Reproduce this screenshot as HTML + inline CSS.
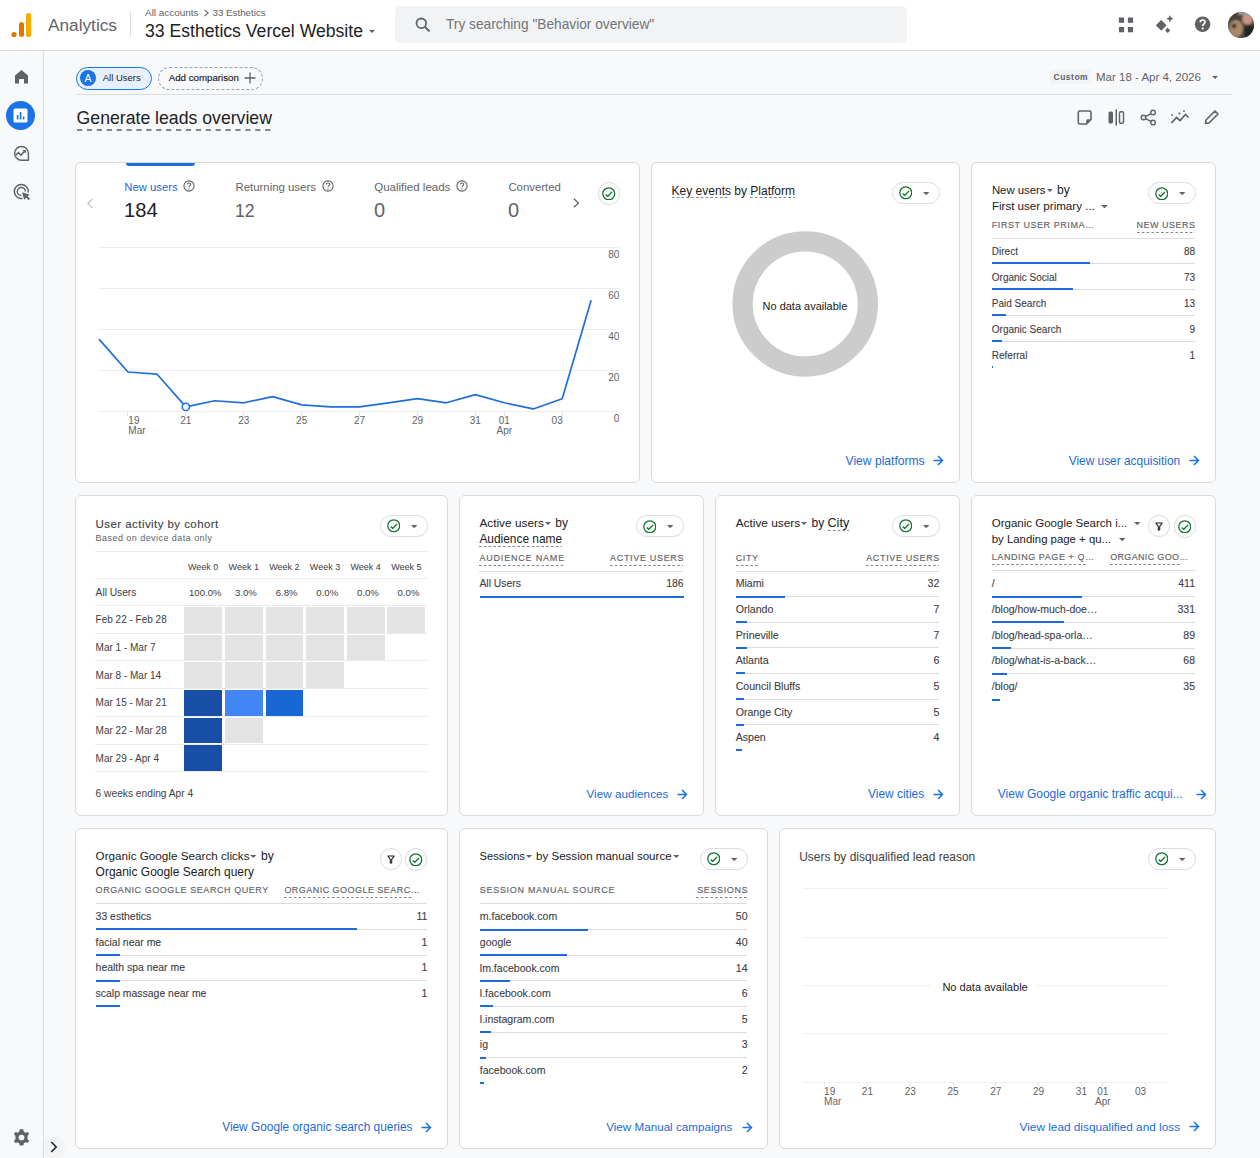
<!DOCTYPE html><html><head><meta charset="utf-8"><style>
html,body{margin:0;padding:0;}
body{width:1260px;height:1158px;position:relative;overflow:hidden;background:#f8f9fa;font-family:"Liberation Sans",sans-serif;}
.t{position:absolute;white-space:nowrap;line-height:1;}
.r{position:absolute;display:block;}
.card{position:absolute;background:#fff;border:1px solid #d9dadc;border-radius:6px;}
.chip{position:absolute;background:#fff;border:1px solid #dadce0;border-radius:11px;}
</style></head><body>
<div class="r" style="left:0.00px;top:0.00px;width:1260.00px;height:50.00px;background:#fff;"></div>
<div class="r" style="left:0.00px;top:50.00px;width:1260.00px;height:1.00px;background:#dadce0;"></div>
<svg class="r" style="left:10px;top:11px;" width="24" height="28" viewBox="0 0 24 28"><circle cx="4" cy="23.5" r="2.6" fill="#e37400"/><rect x="9" y="11" width="5" height="15" rx="2.5" fill="#e37400"/><rect x="16" y="2" width="5.2" height="24" rx="2.6" fill="#f9ab00"/></svg>
<div class="t" style="top:15px;font-size:17.246px;color:#5f6368;line-height:20px;left:48.00px;">Analytics</div>
<div class="r" style="left:130.00px;top:12.00px;width:1.00px;height:25.00px;background:#dadce0;"></div>
<div class="t" style="top:3px;font-size:9.959px;color:#5f6368;line-height:20px;left:145.00px;">All accounts</div>
<svg class="r" style="left:203px;top:9px;" width="7" height="8" viewBox="0 0 7 8"><path d="M1.5 0.8L5.2 4L1.5 7.2" fill="none" stroke="#5f6368" stroke-width="1.1"/></svg>
<div class="t" style="top:3px;font-size:9.785px;color:#5f6368;line-height:20px;left:212.50px;">33 Esthetics</div>
<div class="t" style="top:21px;font-size:17.613px;color:#202124;line-height:20px;left:145.00px;">33 Esthetics Vercel Website</div>
<svg class="r" style="left:369px;top:29.5px;" width="6" height="3" viewBox="0 0 6 3"><path d="M0 0H6L3.0 3Z" fill="#5f6368"/></svg>
<div class="r" style="left:395px;top:6px;width:512px;height:37px;background:#f1f3f4;border-radius:5px"></div>
<svg class="r" style="left:415px;top:17px;" width="17" height="15" viewBox="0 0 17 15"><circle cx="6.3" cy="6.3" r="4.8" fill="none" stroke="#5f6368" stroke-width="1.8"/><path d="M9.8 9.8L14.6 14.4" stroke="#5f6368" stroke-width="2"/></svg>
<div class="t" style="top:15px;font-size:13.723px;color:#70757a;line-height:20px;left:446.00px;">Try searching "Behavior overview"</div>
<svg class="r" style="left:1118px;top:17px;" width="16" height="16" viewBox="0 0 16 16"><rect x="0.9" y="0.5" width="5.2" height="5.3" fill="#5f6368"/><rect x="9.9" y="0.5" width="5.2" height="5.3" fill="#5f6368"/><rect x="0.9" y="10" width="5.2" height="5.3" fill="#5f6368"/><rect x="9.9" y="10" width="5.2" height="5.3" fill="#5f6368"/></svg>
<svg class="r" style="left:1154px;top:14px;" width="20" height="20" viewBox="0 0 20 20"><path d="M7.2 5.9L12.6 11.3L7.2 16.7L1.8 11.3Z" fill="#5f6368"/><path d="M15.9 1L17 3.6L19.6 4.7L17 5.8L15.9 8.4L14.8 5.8L12.2 4.7L14.8 3.6Z" fill="#5f6368"/><path d="M13.7 13.8L16.3 16.4L13.7 19L11.1 16.4Z" fill="#5f6368"/></svg>
<svg class="r" style="left:1194px;top:16px;" width="17" height="17" viewBox="0 0 17 17"><circle cx="8.6" cy="8.3" r="7.8" fill="#616161"/><path d="M6.2 6.3C6.2 4.8 7.2 4 8.6 4C10 4 11 4.9 11 6.1C11 7.8 8.7 7.9 8.7 10" fill="none" stroke="#fff" stroke-width="1.7"/><circle cx="8.7" cy="12.4" r="1.05" fill="#fff"/></svg>
<div class="r" style="left:1228px;top:12px;width:26px;height:26px;border-radius:50%;overflow:hidden;background:#4a4038"><div class="r" style="left:0;top:0;width:26px;height:26px;filter:blur(1.2px)"><div class="r" style="left:14px;top:1px;width:11px;height:12px;border-radius:50%;background:#c99682"></div><div class="r" style="left:1px;top:8px;width:14px;height:17px;border-radius:45%;background:#a88a68"></div><div class="r" style="left:17px;top:14px;width:10px;height:12px;background:#1e231f"></div><div class="r" style="left:10px;top:-2px;width:16px;height:5px;background:#9a9d98"></div><div class="r" style="left:4px;top:12px;width:4px;height:4px;border-radius:50%;background:#2a2420"></div></div></div>
<div class="r" style="left:43.00px;top:51.00px;width:1.00px;height:1107.00px;background:#dadce0;"></div>
<svg class="r" style="left:14px;top:69px;" width="15" height="15" viewBox="0 0 15 15"><path d="M7.5 1L14 6.5V14.5H10V10H5V14.5H1V6.5Z" fill="#5f6368"/></svg>
<div class="r" style="left:6px;top:101px;width:29px;height:29px;border-radius:50%;background:#1a73e8"></div>
<svg class="r" style="left:13px;top:108px;" width="15" height="15" viewBox="0 0 15 15"><rect x="0.5" y="0.5" width="14" height="14" rx="1.5" fill="#fff"/><rect x="3.8" y="7" width="1.6" height="4.5" fill="#1a73e8"/><rect x="6.8" y="4" width="1.6" height="7.5" fill="#1a73e8"/><rect x="9.8" y="8.5" width="1.6" height="3" fill="#1a73e8"/></svg>
<svg class="r" style="left:13px;top:145px;" width="17" height="17" viewBox="0 0 17 17"><path d="M15.4 8.3A6.9 6.9 0 1 0 8.5 15.2H15.4Z" fill="none" stroke="#5f6368" stroke-width="1.5" stroke-linejoin="round"/><path d="M2.9 10.2L5.3 7.6L7.8 10.1L11.3 6.6" fill="none" stroke="#5f6368" stroke-width="1.5"/><path d="M9.4 5H12.9V8.5Z" fill="#5f6368"/></svg>
<svg class="r" style="left:12px;top:183px;" width="18" height="18" viewBox="0 0 18 18"><path d="M16.2 9.7A7 7 0 1 0 10.5 15.4" fill="none" stroke="#5f6368" stroke-width="1.5"/><path d="M13.3 8.5A4 4 0 1 0 9.3 12.5" fill="none" stroke="#5f6368" stroke-width="1.5"/><path d="M10 9.2L17.5 11.4L12.2 16.7Z" fill="#5f6368"/><path d="M14 13.2L17.3 16.5" stroke="#5f6368" stroke-width="1.9"/></svg>
<svg class="r" style="left:12px;top:1128px;" width="19" height="19" viewBox="0 0 19 19"><g transform="translate(9.5 9.5) scale(1.1) translate(-8.5 -8.5)"><path d="M8.5 0.8L10.2 1.2L10.6 3.2L12.2 4.2L14.1 3.5L15.4 5.5L14 7V10L15.4 11.5L14.1 13.5L12.2 12.8L10.6 13.8L10.2 15.8H6.8L6.4 13.8L4.8 12.8L2.9 13.5L1.6 11.5L3 10V7L1.6 5.5L2.9 3.5L4.8 4.2L6.4 3.2L6.8 1.2Z" fill="#5f6368"/><circle cx="8.5" cy="8.5" r="2.6" fill="#f8f9fa"/></g></svg>
<div class="r" style="left:42px;top:1135px;width:24px;height:24px;border-radius:50%;background:#f3f4f5"></div>
<div class="r" style="left:43.00px;top:1135.00px;width:1.00px;height:23.00px;background:#dadce0;"></div>
<svg class="r" style="left:50px;top:1141px;" width="8" height="12" viewBox="0 0 8 12"><path d="M1.2 1L6.2 6L1.2 11" fill="none" stroke="#202124" stroke-width="1.6"/></svg>
<div class="r" style="left:76px;top:67px;width:74px;height:21px;border:1px solid #1a73e8;border-radius:12px;background:#e8f0fe"></div>
<div class="r" style="left:80px;top:70px;width:16px;height:16px;border-radius:50%;background:#1a73e8"></div>
<div class="t" style="top:68px;font-size:10.5px;color:#fff;line-height:20px;left:88.10px;transform:translateX(-50%);">A</div>
<div class="t" style="top:68px;font-size:9.473px;color:#202124;line-height:20px;left:102.80px;">All Users</div>
<div class="r" style="left:158px;top:67px;width:103px;height:21px;border:1px dashed #9aa0a6;border-radius:12px"></div>
<div class="t" style="top:68px;font-size:9.729px;color:#202124;line-height:20px;left:168.70px;-webkit-text-stroke:0.15px #202124;">Add comparison</div>
<svg class="r" style="left:244px;top:72px;" width="12" height="12" viewBox="0 0 12 12"><path d="M6 0.5V11.5M0.5 6H11.5" stroke="#5f6368" stroke-width="1.3"/></svg>
<div class="r" style="left:76.00px;top:94.00px;width:1156.00px;height:1.00px;background:#dadce0;"></div>
<div class="r" style="left:1050px;top:70px;width:41px;height:14px;background:#f1f3f4;border-radius:2px"></div>
<div class="t" style="top:67px;font-size:8.5px;color:#5f6368;line-height:20px;font-weight:700;letter-spacing:0.5px;left:1053.50px;">Custom</div>
<div class="t" style="top:67px;font-size:11.518px;color:#5f6368;line-height:20px;left:1096.00px;">Mar 18 - Apr 4, 2026</div>
<svg class="r" style="left:1212px;top:76px;" width="6" height="3" viewBox="0 0 6 3"><path d="M0 0H6L3.0 3Z" fill="#5f6368"/></svg>
<div class="t" style="top:108px;font-size:17.679px;color:#202124;line-height:20px;left:76.60px;">Generate leads overview</div>
<svg class="r" style="left:76.5px;top:129px;" width="196.5" height="2" viewBox="0 0 196.5 2"><line x1="0" y1="1.0" x2="196.5" y2="1.0" stroke="#80868b" stroke-width="2" stroke-dasharray="5.2 4.7"/></svg>
<svg class="r" style="left:1076px;top:109px;" width="17" height="17" viewBox="0 0 17 17"><path d="M2.3 3.5Q2.3 2 3.8 2H13.5Q15 2 15 3.5V10.5L10.5 15H3.8Q2.3 15 2.3 13.5Z" fill="none" stroke="#5f6368" stroke-width="1.6" stroke-linejoin="round"/><path d="M10.2 15.2V11.8Q10.2 10.3 11.7 10.3H15.2Z" fill="#5f6368"/></svg>
<svg class="r" style="left:1107px;top:109px;" width="19" height="17" viewBox="0 0 19 17"><rect x="1.5" y="2.5" width="4.5" height="12" rx="1.5" fill="#5f6368"/><rect x="8.5" y="0.5" width="1.5" height="16" fill="#5f6368"/><rect x="12.5" y="2.8" width="4" height="11.5" rx="1.2" fill="none" stroke="#5f6368" stroke-width="1.5"/></svg>
<svg class="r" style="left:1140px;top:109px;" width="17" height="17" viewBox="0 0 17 17"><circle cx="13" cy="3.5" r="2.3" fill="none" stroke="#5f6368" stroke-width="1.4"/><circle cx="3.5" cy="8.5" r="2.3" fill="none" stroke="#5f6368" stroke-width="1.4"/><circle cx="13" cy="13.5" r="2.3" fill="none" stroke="#5f6368" stroke-width="1.4"/><path d="M5.5 7.4L11 4.6M5.5 9.6L11 12.4" stroke="#5f6368" stroke-width="1.4"/></svg>
<svg class="r" style="left:1170px;top:109px;" width="20" height="17" viewBox="0 0 20 17"><path d="M1.5 14L6.5 8.5L10 11.5L15.5 5.5L18.5 8.5" fill="none" stroke="#5f6368" stroke-width="1.7"/><circle cx="2" cy="6" r="0.9" fill="#5f6368"/><circle cx="9.5" cy="4.5" r="1.1" fill="#5f6368"/><circle cx="14" cy="2" r="0.9" fill="#5f6368"/></svg>
<svg class="r" style="left:1203px;top:109px;" width="17" height="17" viewBox="0 0 17 17"><path d="M2.5 14.5L3 11L12 2L15 5L6 14Z" fill="none" stroke="#5f6368" stroke-width="1.7" stroke-linejoin="round"/></svg>
<div class="card" style="left:75px;top:162px;width:563px;height:319px"></div>
<div class="card" style="left:651px;top:162px;width:307px;height:319px"></div>
<div class="card" style="left:971px;top:162px;width:243px;height:319px"></div>
<div class="card" style="left:75px;top:495px;width:371px;height:319px"></div>
<div class="card" style="left:459px;top:495px;width:243px;height:319px"></div>
<div class="card" style="left:715px;top:495px;width:243px;height:319px"></div>
<div class="card" style="left:971px;top:495px;width:243px;height:319px"></div>
<div class="card" style="left:75px;top:828px;width:371px;height:319px"></div>
<div class="card" style="left:459px;top:828px;width:307px;height:319px"></div>
<div class="card" style="left:779px;top:828px;width:435px;height:319px"></div>
<div class="r" style="left:126px;top:163px;width:69px;height:3px;background:#1a6fdc;border-radius:0 0 3px 3px"></div>
<svg class="r" style="left:86px;top:198px;" width="8" height="11" viewBox="0 0 8 11"><path d="M6.5 0.8L1.8 5.5L6.5 10.2" fill="none" stroke="#bdc1c6" stroke-width="1.2"/></svg>
<div class="t" style="top:177px;font-size:11.304px;color:#1b6bd6;line-height:20px;left:124.30px;">New users</div>
<svg class="r" style="left:183.3px;top:180.2px;" width="12" height="12" viewBox="0 0 12 12"><circle cx="6" cy="6" r="5.1" fill="none" stroke="#5f6368" stroke-width="1.1"/><path d="M4.3 4.6C4.3 3.6 5 3 6 3C7 3 7.7 3.6 7.7 4.5C7.7 5.6 6 5.8 6 7.2" fill="none" stroke="#5f6368" stroke-width="1.1"/><circle cx="6" cy="8.9" r="0.7" fill="#5f6368"/></svg>
<div class="t" style="top:200px;font-size:20.204px;color:#202124;line-height:20px;left:124.00px;">184</div>
<div class="t" style="top:177px;font-size:11.418px;color:#5f6368;line-height:20px;left:235.40px;">Returning users</div>
<svg class="r" style="left:321.7px;top:180.2px;" width="12" height="12" viewBox="0 0 12 12"><circle cx="6" cy="6" r="5.1" fill="none" stroke="#5f6368" stroke-width="1.1"/><path d="M4.3 4.6C4.3 3.6 5 3 6 3C7 3 7.7 3.6 7.7 4.5C7.7 5.6 6 5.8 6 7.2" fill="none" stroke="#5f6368" stroke-width="1.1"/><circle cx="6" cy="8.9" r="0.7" fill="#5f6368"/></svg>
<div class="t" style="top:201px;font-size:17.626px;color:#5f6368;line-height:20px;left:235.00px;">12</div>
<div class="t" style="top:177px;font-size:11.534px;color:#5f6368;line-height:20px;left:374.20px;">Qualified leads</div>
<svg class="r" style="left:456px;top:180.2px;" width="12" height="12" viewBox="0 0 12 12"><circle cx="6" cy="6" r="5.1" fill="none" stroke="#5f6368" stroke-width="1.1"/><path d="M4.3 4.6C4.3 3.6 5 3 6 3C7 3 7.7 3.6 7.7 4.5C7.7 5.6 6 5.8 6 7.2" fill="none" stroke="#5f6368" stroke-width="1.1"/><circle cx="6" cy="8.9" r="0.7" fill="#5f6368"/></svg>
<div class="t" style="top:200px;font-size:20px;color:#5f6368;line-height:20px;left:374.00px;">0</div>
<div class="r" style="left:508px;top:178px;width:55px;height:45px;overflow:hidden">
<div class="t" style="top:-1px;font-size:11.4px;color:#5f6368;line-height:20px;left:0.40px;">Converted</div>
<div class="t" style="top:22px;font-size:20px;color:#5f6368;line-height:20px;left:0.00px;">0</div>
</div>
<svg class="r" style="left:572px;top:198px;" width="9" height="10" viewBox="0 0 9 10"><path d="M1.8 0.8L6.5 5L1.8 9.2" fill="none" stroke="#5f6368" stroke-width="1.3"/></svg>
<div class="chip" style="left:597.5px;top:182.3px;width:20.5px;height:20.5px;border-radius:50%"></div>
<svg class="r" style="left:602.0px;top:186.8px;" width="13.5" height="13.5" viewBox="0 0 13.5 13.5"><circle cx="6.75" cy="6.75" r="5.95" fill="none" stroke="#137333" stroke-width="1.3"/><path d="M3.6450000000000005 7.425000000000001 L5.805 9.315 L10.125 4.859999999999999" fill="none" stroke="#137333" stroke-width="1.35"/></svg>
<div class="r" style="left:98.00px;top:246.70px;width:521.00px;height:1.00px;background:#eeeeee;"></div>
<div class="r" style="left:98.00px;top:287.80px;width:521.00px;height:1.00px;background:#eeeeee;"></div>
<div class="r" style="left:98.00px;top:328.90px;width:521.00px;height:1.00px;background:#eeeeee;"></div>
<div class="r" style="left:98.00px;top:369.70px;width:521.00px;height:1.00px;background:#eeeeee;"></div>
<div class="r" style="left:98.00px;top:410.50px;width:521.00px;height:1.00px;background:#eeeeee;"></div>
<div class="t" style="top:245px;font-size:10px;color:#5f6368;line-height:20px;right:640.60px;">80</div>
<div class="t" style="top:286px;font-size:10px;color:#5f6368;line-height:20px;right:640.60px;">60</div>
<div class="t" style="top:327px;font-size:10px;color:#5f6368;line-height:20px;right:640.60px;">40</div>
<div class="t" style="top:368px;font-size:10px;color:#5f6368;line-height:20px;right:640.60px;">20</div>
<div class="t" style="top:409px;font-size:10px;color:#5f6368;line-height:20px;right:640.60px;">0</div>
<svg class="r" style="left:90px;top:230px;" width="520" height="200" viewBox="0 0 520 200"><path d="M9.00 109.16 L37.95 142.00 L66.90 144.06 L95.85 176.89 L124.80 170.74 L153.75 172.79 L182.70 166.63 L211.65 174.84 L240.60 176.89 L269.55 176.89 L298.50 172.79 L327.45 168.69 L356.40 172.79 L385.35 164.58 L414.30 172.79 L443.25 178.95 L472.20 168.69 L501.15 70.16" fill="none" stroke="#1f6fd9" stroke-width="1.7" stroke-linejoin="round"/><circle cx="95.85" cy="176.89" r="3.6" fill="#fff" stroke="#1a73e8" stroke-width="1.6"/></svg>
<div class="r" style="left:127.45px;top:411.00px;width:1.00px;height:5.00px;background:#e6e6e6;"></div>
<div class="t" style="top:411px;font-size:10px;color:#5f6368;line-height:20px;left:128.35px;">19</div>
<div class="t" style="top:421px;font-size:10px;color:#5f6368;line-height:20px;left:128.35px;">Mar</div>
<div class="r" style="left:185.35px;top:411.00px;width:1.00px;height:5.00px;background:#e6e6e6;"></div>
<div class="t" style="top:411px;font-size:10px;color:#5f6368;line-height:20px;left:185.85px;transform:translateX(-50%);">21</div>
<div class="r" style="left:243.25px;top:411.00px;width:1.00px;height:5.00px;background:#e6e6e6;"></div>
<div class="t" style="top:411px;font-size:10px;color:#5f6368;line-height:20px;left:243.75px;transform:translateX(-50%);">23</div>
<div class="r" style="left:301.15px;top:411.00px;width:1.00px;height:5.00px;background:#e6e6e6;"></div>
<div class="t" style="top:411px;font-size:10px;color:#5f6368;line-height:20px;left:301.65px;transform:translateX(-50%);">25</div>
<div class="r" style="left:359.05px;top:411.00px;width:1.00px;height:5.00px;background:#e6e6e6;"></div>
<div class="t" style="top:411px;font-size:10px;color:#5f6368;line-height:20px;left:359.55px;transform:translateX(-50%);">27</div>
<div class="r" style="left:416.95px;top:411.00px;width:1.00px;height:5.00px;background:#e6e6e6;"></div>
<div class="t" style="top:411px;font-size:10px;color:#5f6368;line-height:20px;left:417.45px;transform:translateX(-50%);">29</div>
<div class="r" style="left:474.85px;top:411.00px;width:1.00px;height:5.00px;background:#e6e6e6;"></div>
<div class="t" style="top:411px;font-size:10px;color:#5f6368;line-height:20px;left:475.35px;transform:translateX(-50%);">31</div>
<div class="r" style="left:503.80px;top:411.00px;width:1.00px;height:5.00px;background:#e6e6e6;"></div>
<div class="t" style="top:411px;font-size:10px;color:#5f6368;line-height:20px;left:504.30px;transform:translateX(-50%);">01</div>
<div class="t" style="top:421px;font-size:10px;color:#5f6368;line-height:20px;left:504.30px;transform:translateX(-50%);">Apr</div>
<div class="r" style="left:561.70px;top:411.00px;width:1.00px;height:5.00px;background:#e6e6e6;"></div>
<div class="t" style="top:411px;font-size:10px;color:#5f6368;line-height:20px;right:697.30px;">03</div>
<div class="t" style="top:181px;font-size:12.011px;color:#202124;line-height:20px;left:671.60px;">Key events by Platform</div>
<svg class="r" style="left:671.6px;top:197px;" width="58.4" height="1" viewBox="0 0 58.4 1"><line x1="0" y1="0.5" x2="58.39999999999998" y2="0.5" stroke="#80868b" stroke-width="1" stroke-dasharray="2.6 2.2"/></svg>
<svg class="r" style="left:750px;top:197px;" width="45" height="1" viewBox="0 0 45 1"><line x1="0" y1="0.5" x2="45" y2="0.5" stroke="#80868b" stroke-width="1" stroke-dasharray="2.6 2.2"/></svg>
<div class="chip" style="left:892px;top:182px;width:46px;height:20px"></div>
<svg class="r" style="left:898.75px;top:186.45px;" width="13.5" height="13.5" viewBox="0 0 13.5 13.5"><circle cx="6.75" cy="6.75" r="5.95" fill="none" stroke="#137333" stroke-width="1.3"/><path d="M3.6450000000000005 7.425000000000001 L5.805 9.315 L10.125 4.859999999999999" fill="none" stroke="#137333" stroke-width="1.35"/></svg>
<svg class="r" style="left:922.5px;top:191.7px;" width="6.5" height="3.2" viewBox="0 0 6.5 3.2"><path d="M0 0H6.5L3.25 3.2Z" fill="#5f6368"/></svg>
<svg class="r" style="left:725px;top:224px;" width="160" height="160" viewBox="0 0 160 160"><circle cx="80.2" cy="79.9" r="62.6" fill="none" stroke="#cccccc" stroke-width="20.3"/></svg>
<div class="t" style="top:296px;font-size:10.986px;color:#202124;line-height:20px;left:762.60px;">No data available</div>
<div class="t" style="top:451px;font-size:12.08px;color:#1b6bd6;line-height:20px;left:845.60px;">View platforms</div>
<svg class="r" style="left:933px;top:455.3px;" width="11" height="11" viewBox="0 0 11 11"><path d="M0.5 5.5H9.5M5 1L9.5 5.5L5 10" fill="none" stroke="#1a73e8" stroke-width="1.5"/></svg>
<div class="t" style="top:180px;font-size:11.367px;color:#202124;line-height:20px;left:991.90px;">New users</div>
<svg class="r" style="left:1047.2px;top:189.2px;" width="5.8" height="2.9" viewBox="0 0 5.8 2.9"><path d="M0 0H5.8L2.9 2.9Z" fill="#5f6368"/></svg>
<div class="t" style="top:180px;font-size:12px;color:#202124;line-height:20px;left:1057.00px;">by</div>
<div class="t" style="top:196px;font-size:11.586px;color:#202124;line-height:20px;left:991.90px;">First user primary ...</div>
<svg class="r" style="left:1101.4px;top:204.6px;" width="6.9" height="3.2" viewBox="0 0 6.9 3.2"><path d="M0 0H6.9L3.45 3.2Z" fill="#5f6368"/></svg>
<div class="chip" style="left:1148px;top:182.3px;width:46px;height:20px"></div>
<svg class="r" style="left:1154.75px;top:186.75px;" width="13.5" height="13.5" viewBox="0 0 13.5 13.5"><circle cx="6.75" cy="6.75" r="5.95" fill="none" stroke="#137333" stroke-width="1.3"/><path d="M3.6450000000000005 7.425000000000001 L5.805 9.315 L10.125 4.859999999999999" fill="none" stroke="#137333" stroke-width="1.35"/></svg>
<svg class="r" style="left:1178.5px;top:192.0px;" width="6.5" height="3.2" viewBox="0 0 6.5 3.2"><path d="M0 0H6.5L3.25 3.2Z" fill="#5f6368"/></svg>
<div class="t" style="top:215px;font-size:9px;color:#5f6368;line-height:20px;letter-spacing:0.553px;left:991.80px;-webkit-text-stroke:0.15px #5f6368;">FIRST USER PRIMA…</div>
<div class="t" style="top:215px;font-size:9px;color:#5f6368;line-height:20px;letter-spacing:0.5px;right:64.50px;-webkit-text-stroke:0.15px #5f6368;">NEW USERS</div>
<svg class="r" style="left:1136.5px;top:232.3px;" width="58.5" height="1" viewBox="0 0 58.5 1"><line x1="0" y1="0.5" x2="58.5" y2="0.5" stroke="#80868b" stroke-width="1" stroke-dasharray="2.6 2.2"/></svg>
<div class="r" style="left:991.80px;top:237.50px;width:203.20px;height:1.00px;background:#dadce0;"></div>
<div class="t" style="top:242px;font-size:10.0px;color:#3c4043;line-height:20px;left:991.80px;-webkit-text-stroke:0.1px #3c4043;">Direct</div>
<div class="t" style="top:242px;font-size:10.0px;color:#3c4043;line-height:20px;right:65.00px;-webkit-text-stroke:0.1px #3c4043;">88</div>
<div class="r" style="left:991.80px;top:262.80px;width:203.20px;height:1.00px;background:#dadce0;"></div>
<div class="r" style="left:992.30px;top:262.30px;width:98.00px;height:2.00px;background:#1c6bd9;"></div>
<div class="t" style="top:268px;font-size:10.0px;color:#3c4043;line-height:20px;left:991.80px;-webkit-text-stroke:0.1px #3c4043;">Organic Social</div>
<div class="t" style="top:268px;font-size:10.0px;color:#3c4043;line-height:20px;right:65.00px;-webkit-text-stroke:0.1px #3c4043;">73</div>
<div class="r" style="left:991.80px;top:288.70px;width:203.20px;height:1.00px;background:#dadce0;"></div>
<div class="r" style="left:992.30px;top:288.20px;width:81.00px;height:2.00px;background:#1c6bd9;"></div>
<div class="t" style="top:294px;font-size:10.0px;color:#3c4043;line-height:20px;left:991.80px;-webkit-text-stroke:0.1px #3c4043;">Paid Search</div>
<div class="t" style="top:294px;font-size:10.0px;color:#3c4043;line-height:20px;right:65.00px;-webkit-text-stroke:0.1px #3c4043;">13</div>
<div class="r" style="left:991.80px;top:314.60px;width:203.20px;height:1.00px;background:#dadce0;"></div>
<div class="r" style="left:992.30px;top:314.10px;width:14.00px;height:2.00px;background:#1c6bd9;"></div>
<div class="t" style="top:320px;font-size:10.0px;color:#3c4043;line-height:20px;left:991.80px;-webkit-text-stroke:0.1px #3c4043;">Organic Search</div>
<div class="t" style="top:320px;font-size:10.0px;color:#3c4043;line-height:20px;right:65.00px;-webkit-text-stroke:0.1px #3c4043;">9</div>
<div class="r" style="left:991.80px;top:340.50px;width:203.20px;height:1.00px;background:#dadce0;"></div>
<div class="r" style="left:992.30px;top:340.00px;width:10.00px;height:2.00px;background:#1c6bd9;"></div>
<div class="t" style="top:346px;font-size:10.0px;color:#3c4043;line-height:20px;left:991.80px;-webkit-text-stroke:0.1px #3c4043;">Referral</div>
<div class="t" style="top:346px;font-size:10.0px;color:#3c4043;line-height:20px;right:65.00px;-webkit-text-stroke:0.1px #3c4043;">1</div>
<div class="r" style="left:992.30px;top:365.90px;width:1.20px;height:2.00px;background:#1c6bd9;"></div>
<div class="t" style="top:451px;font-size:11.903px;color:#1b6bd6;line-height:20px;left:1068.70px;">View user acquisition</div>
<svg class="r" style="left:1189.2px;top:455.3px;" width="11" height="11" viewBox="0 0 11 11"><path d="M0.5 5.5H9.5M5 1L9.5 5.5L5 10" fill="none" stroke="#1a73e8" stroke-width="1.5"/></svg>
<div class="t" style="top:514px;font-size:11.5px;color:#3c4043;line-height:20px;letter-spacing:0.436px;left:95.60px;-webkit-text-stroke:0.12px #3c4043;">User activity by cohort</div>
<div class="t" style="top:528px;font-size:9px;color:#5f6368;line-height:20px;letter-spacing:0.451px;left:95.60px;">Based on device data only</div>
<div class="chip" style="left:380px;top:515px;width:46px;height:20px"></div>
<svg class="r" style="left:386.75px;top:519.45px;" width="13.5" height="13.5" viewBox="0 0 13.5 13.5"><circle cx="6.75" cy="6.75" r="5.95" fill="none" stroke="#137333" stroke-width="1.3"/><path d="M3.6450000000000005 7.425000000000001 L5.805 9.315 L10.125 4.859999999999999" fill="none" stroke="#137333" stroke-width="1.35"/></svg>
<svg class="r" style="left:410.5px;top:524.7px;" width="6.5" height="3.2" viewBox="0 0 6.5 3.2"><path d="M0 0H6.5L3.25 3.2Z" fill="#5f6368"/></svg>
<div class="r" style="left:95.00px;top:551.00px;width:332.00px;height:1.00px;background:#e8eaed;"></div>
<div class="t" style="top:557px;font-size:9px;color:#3c4043;line-height:20px;left:203.10px;transform:translateX(-50%);">Week 0</div>
<div class="t" style="top:557px;font-size:9px;color:#3c4043;line-height:20px;left:243.75px;transform:translateX(-50%);">Week 1</div>
<div class="t" style="top:557px;font-size:9px;color:#3c4043;line-height:20px;left:284.40px;transform:translateX(-50%);">Week 2</div>
<div class="t" style="top:557px;font-size:9px;color:#3c4043;line-height:20px;left:325.05px;transform:translateX(-50%);">Week 3</div>
<div class="t" style="top:557px;font-size:9px;color:#3c4043;line-height:20px;left:365.70px;transform:translateX(-50%);">Week 4</div>
<div class="t" style="top:557px;font-size:9px;color:#3c4043;line-height:20px;left:406.35px;transform:translateX(-50%);">Week 5</div>
<div class="r" style="left:95.00px;top:578.30px;width:332.00px;height:1.00px;background:#e8eaed;"></div>
<div class="t" style="top:583px;font-size:10.197px;color:#3c4043;line-height:20px;left:95.60px;">All Users</div>
<div class="t" style="top:583px;font-size:9.6px;color:#3c4043;line-height:20px;left:205.30px;transform:translateX(-50%);">100.0%</div>
<div class="t" style="top:583px;font-size:9.6px;color:#3c4043;line-height:20px;left:245.95px;transform:translateX(-50%);">3.0%</div>
<div class="t" style="top:583px;font-size:9.6px;color:#3c4043;line-height:20px;left:286.60px;transform:translateX(-50%);">6.8%</div>
<div class="t" style="top:583px;font-size:9.6px;color:#3c4043;line-height:20px;left:327.25px;transform:translateX(-50%);">0.0%</div>
<div class="t" style="top:583px;font-size:9.6px;color:#3c4043;line-height:20px;left:367.90px;transform:translateX(-50%);">0.0%</div>
<div class="t" style="top:583px;font-size:9.6px;color:#3c4043;line-height:20px;left:408.55px;transform:translateX(-50%);">0.0%</div>
<div class="r" style="left:95.00px;top:605.10px;width:332.00px;height:1.00px;background:#e8eaed;"></div>
<div class="r" style="left:95.00px;top:632.79px;width:332.00px;height:1.00px;background:#e8eaed;"></div>
<div class="r" style="left:95.00px;top:660.48px;width:332.00px;height:1.00px;background:#e8eaed;"></div>
<div class="r" style="left:95.00px;top:688.17px;width:332.00px;height:1.00px;background:#e8eaed;"></div>
<div class="r" style="left:95.00px;top:715.86px;width:332.00px;height:1.00px;background:#e8eaed;"></div>
<div class="r" style="left:95.00px;top:743.55px;width:332.00px;height:1.00px;background:#e8eaed;"></div>
<div class="r" style="left:95.00px;top:771.24px;width:332.00px;height:1.00px;background:#e8eaed;"></div>
<div class="t" style="top:610px;font-size:10px;color:#3c4043;line-height:20px;left:95.60px;">Feb 22 - Feb 28</div>
<div class="r" style="left:184.20px;top:606.90px;width:37.80px;height:25.80px;background:#e3e3e3;"></div>
<div class="r" style="left:224.85px;top:606.90px;width:37.80px;height:25.80px;background:#e3e3e3;"></div>
<div class="r" style="left:265.50px;top:606.90px;width:37.80px;height:25.80px;background:#e3e3e3;"></div>
<div class="r" style="left:306.15px;top:606.90px;width:37.80px;height:25.80px;background:#e3e3e3;"></div>
<div class="r" style="left:346.80px;top:606.90px;width:37.80px;height:25.80px;background:#e3e3e3;"></div>
<div class="r" style="left:387.45px;top:606.90px;width:37.80px;height:25.80px;background:#e3e3e3;"></div>
<div class="t" style="top:638px;font-size:10px;color:#3c4043;line-height:20px;left:95.60px;">Mar 1 - Mar 7</div>
<div class="r" style="left:184.20px;top:634.59px;width:37.80px;height:25.80px;background:#e3e3e3;"></div>
<div class="r" style="left:224.85px;top:634.59px;width:37.80px;height:25.80px;background:#e3e3e3;"></div>
<div class="r" style="left:265.50px;top:634.59px;width:37.80px;height:25.80px;background:#e3e3e3;"></div>
<div class="r" style="left:306.15px;top:634.59px;width:37.80px;height:25.80px;background:#e3e3e3;"></div>
<div class="r" style="left:346.80px;top:634.59px;width:37.80px;height:25.80px;background:#e3e3e3;"></div>
<div class="t" style="top:666px;font-size:10px;color:#3c4043;line-height:20px;left:95.60px;">Mar 8 - Mar 14</div>
<div class="r" style="left:184.20px;top:662.28px;width:37.80px;height:25.80px;background:#e3e3e3;"></div>
<div class="r" style="left:224.85px;top:662.28px;width:37.80px;height:25.80px;background:#e3e3e3;"></div>
<div class="r" style="left:265.50px;top:662.28px;width:37.80px;height:25.80px;background:#e3e3e3;"></div>
<div class="r" style="left:306.15px;top:662.28px;width:37.80px;height:25.80px;background:#e3e3e3;"></div>
<div class="t" style="top:693px;font-size:10px;color:#3c4043;line-height:20px;left:95.60px;">Mar 15 - Mar 21</div>
<div class="r" style="left:184.20px;top:689.97px;width:37.80px;height:25.80px;background:#174ea6;"></div>
<div class="r" style="left:224.85px;top:689.97px;width:37.80px;height:25.80px;background:#4285f4;"></div>
<div class="r" style="left:265.50px;top:689.97px;width:37.80px;height:25.80px;background:#1967d2;"></div>
<div class="t" style="top:721px;font-size:10px;color:#3c4043;line-height:20px;left:95.60px;">Mar 22 - Mar 28</div>
<div class="r" style="left:184.20px;top:717.66px;width:37.80px;height:25.80px;background:#174ea6;"></div>
<div class="r" style="left:224.85px;top:717.66px;width:37.80px;height:25.80px;background:#e3e3e3;"></div>
<div class="t" style="top:749px;font-size:10px;color:#3c4043;line-height:20px;left:95.60px;">Mar 29 - Apr 4</div>
<div class="r" style="left:184.20px;top:745.35px;width:37.80px;height:25.80px;background:#174ea6;"></div>
<div class="t" style="top:784px;font-size:10.218px;color:#3c4043;line-height:20px;left:95.60px;">6 weeks ending Apr 4</div>
<div class="t" style="top:513px;font-size:11.844px;color:#202124;line-height:20px;left:479.40px;">Active users</div>
<svg class="r" style="left:545px;top:522px;" width="6.1" height="3" viewBox="0 0 6.1 3"><path d="M0 0H6.1L3.05 3Z" fill="#5f6368"/></svg>
<div class="t" style="top:513px;font-size:12px;color:#202124;line-height:20px;left:555.30px;">by</div>
<div class="t" style="top:529px;font-size:11.915px;color:#202124;line-height:20px;left:479.40px;">Audience name</div>
<svg class="r" style="left:479.4px;top:546px;" width="83.1" height="1" viewBox="0 0 83.1 1"><line x1="0" y1="0.5" x2="83.10000000000002" y2="0.5" stroke="#80868b" stroke-width="1" stroke-dasharray="2.6 2.2"/></svg>
<div class="chip" style="left:636px;top:515.3px;width:46px;height:20px"></div>
<svg class="r" style="left:642.75px;top:519.75px;" width="13.5" height="13.5" viewBox="0 0 13.5 13.5"><circle cx="6.75" cy="6.75" r="5.95" fill="none" stroke="#137333" stroke-width="1.3"/><path d="M3.6450000000000005 7.425000000000001 L5.805 9.315 L10.125 4.859999999999999" fill="none" stroke="#137333" stroke-width="1.35"/></svg>
<svg class="r" style="left:666.5px;top:525.0px;" width="6.5" height="3.2" viewBox="0 0 6.5 3.2"><path d="M0 0H6.5L3.25 3.2Z" fill="#5f6368"/></svg>
<div class="t" style="top:548px;font-size:9px;color:#5f6368;line-height:20px;letter-spacing:0.815px;left:479.40px;-webkit-text-stroke:0.15px #5f6368;">AUDIENCE NAME</div>
<div class="t" style="top:548px;font-size:9px;color:#5f6368;line-height:20px;letter-spacing:0.671px;right:575.83px;-webkit-text-stroke:0.15px #5f6368;">ACTIVE USERS</div>
<svg class="r" style="left:479.4px;top:565.2px;" width="84.8" height="1" viewBox="0 0 84.8 1"><line x1="0" y1="0.5" x2="84.80000000000007" y2="0.5" stroke="#80868b" stroke-width="1" stroke-dasharray="2.6 2.2"/></svg>
<svg class="r" style="left:609.8px;top:565.2px;" width="73.5" height="1" viewBox="0 0 73.5 1"><line x1="0" y1="0.5" x2="73.5" y2="0.5" stroke="#80868b" stroke-width="1" stroke-dasharray="2.6 2.2"/></svg>
<div class="r" style="left:479.40px;top:570.50px;width:204.10px;height:1.00px;background:#dadce0;"></div>
<div class="t" style="top:574px;font-size:10.4px;color:#3c4043;line-height:20px;left:479.40px;-webkit-text-stroke:0.1px #3c4043;">All Users</div>
<div class="t" style="top:574px;font-size:10.4px;color:#3c4043;line-height:20px;right:576.50px;-webkit-text-stroke:0.1px #3c4043;">186</div>
<div class="r" style="left:479.90px;top:595.80px;width:204.00px;height:2.00px;background:#1c6bd9;"></div>
<div class="t" style="top:784px;font-size:11.738px;color:#1b6bd6;line-height:20px;left:586.50px;">View audiences</div>
<svg class="r" style="left:677px;top:788.8px;" width="11" height="11" viewBox="0 0 11 11"><path d="M0.5 5.5H9.5M5 1L9.5 5.5L5 10" fill="none" stroke="#1a73e8" stroke-width="1.5"/></svg>
<div class="t" style="top:513px;font-size:11.844px;color:#202124;line-height:20px;left:735.70px;">Active users</div>
<svg class="r" style="left:801.2px;top:521.9px;" width="6" height="3" viewBox="0 0 6 3"><path d="M0 0H6L3.0 3Z" fill="#5f6368"/></svg>
<div class="t" style="top:513px;font-size:12px;color:#202124;line-height:20px;left:811.50px;">by</div>
<div class="t" style="top:513px;font-size:12.602px;color:#202124;line-height:20px;left:827.50px;">City</div>
<svg class="r" style="left:827.5px;top:530px;" width="21.7" height="1" viewBox="0 0 21.7 1"><line x1="0" y1="0.5" x2="21.700000000000045" y2="0.5" stroke="#80868b" stroke-width="1" stroke-dasharray="2.6 2.2"/></svg>
<div class="chip" style="left:892px;top:515px;width:46px;height:20px"></div>
<svg class="r" style="left:898.75px;top:519.45px;" width="13.5" height="13.5" viewBox="0 0 13.5 13.5"><circle cx="6.75" cy="6.75" r="5.95" fill="none" stroke="#137333" stroke-width="1.3"/><path d="M3.6450000000000005 7.425000000000001 L5.805 9.315 L10.125 4.859999999999999" fill="none" stroke="#137333" stroke-width="1.35"/></svg>
<svg class="r" style="left:922.5px;top:524.7px;" width="6.5" height="3.2" viewBox="0 0 6.5 3.2"><path d="M0 0H6.5L3.25 3.2Z" fill="#5f6368"/></svg>
<div class="t" style="top:548px;font-size:9px;color:#5f6368;line-height:20px;letter-spacing:0.633px;left:735.70px;-webkit-text-stroke:0.15px #5f6368;">CITY</div>
<div class="t" style="top:548px;font-size:9px;color:#5f6368;line-height:20px;letter-spacing:0.644px;right:320.06px;-webkit-text-stroke:0.15px #5f6368;">ACTIVE USERS</div>
<svg class="r" style="left:735.7px;top:565.3px;" width="22.4" height="1" viewBox="0 0 22.4 1"><line x1="0" y1="0.5" x2="22.399999999999977" y2="0.5" stroke="#80868b" stroke-width="1" stroke-dasharray="2.6 2.2"/></svg>
<svg class="r" style="left:866px;top:565.3px;" width="73" height="1" viewBox="0 0 73 1"><line x1="0" y1="0.5" x2="73" y2="0.5" stroke="#80868b" stroke-width="1" stroke-dasharray="2.6 2.2"/></svg>
<div class="r" style="left:735.70px;top:570.90px;width:203.60px;height:1.00px;background:#dadce0;"></div>
<div class="t" style="top:573px;font-size:10.6px;color:#3c4043;line-height:20px;left:735.70px;-webkit-text-stroke:0.1px #3c4043;">Miami</div>
<div class="t" style="top:573px;font-size:10.6px;color:#3c4043;line-height:20px;right:320.70px;-webkit-text-stroke:0.1px #3c4043;">32</div>
<div class="r" style="left:735.70px;top:596.00px;width:203.60px;height:1.00px;background:#dadce0;"></div>
<div class="r" style="left:736.20px;top:595.50px;width:49.00px;height:2.00px;background:#1c6bd9;"></div>
<div class="t" style="top:599px;font-size:10.6px;color:#3c4043;line-height:20px;left:735.70px;-webkit-text-stroke:0.1px #3c4043;">Orlando</div>
<div class="t" style="top:599px;font-size:10.6px;color:#3c4043;line-height:20px;right:320.70px;-webkit-text-stroke:0.1px #3c4043;">7</div>
<div class="r" style="left:735.70px;top:621.65px;width:203.60px;height:1.00px;background:#dadce0;"></div>
<div class="r" style="left:736.20px;top:621.15px;width:11.00px;height:2.00px;background:#1c6bd9;"></div>
<div class="t" style="top:625px;font-size:10.6px;color:#3c4043;line-height:20px;left:735.70px;-webkit-text-stroke:0.1px #3c4043;">Prineville</div>
<div class="t" style="top:625px;font-size:10.6px;color:#3c4043;line-height:20px;right:320.70px;-webkit-text-stroke:0.1px #3c4043;">7</div>
<div class="r" style="left:735.70px;top:647.30px;width:203.60px;height:1.00px;background:#dadce0;"></div>
<div class="r" style="left:736.20px;top:646.80px;width:11.00px;height:2.00px;background:#1c6bd9;"></div>
<div class="t" style="top:650px;font-size:10.6px;color:#3c4043;line-height:20px;left:735.70px;-webkit-text-stroke:0.1px #3c4043;">Atlanta</div>
<div class="t" style="top:650px;font-size:10.6px;color:#3c4043;line-height:20px;right:320.70px;-webkit-text-stroke:0.1px #3c4043;">6</div>
<div class="r" style="left:735.70px;top:672.95px;width:203.60px;height:1.00px;background:#dadce0;"></div>
<div class="r" style="left:736.20px;top:672.45px;width:9.00px;height:2.00px;background:#1c6bd9;"></div>
<div class="t" style="top:676px;font-size:10.6px;color:#3c4043;line-height:20px;left:735.70px;-webkit-text-stroke:0.1px #3c4043;">Council Bluffs</div>
<div class="t" style="top:676px;font-size:10.6px;color:#3c4043;line-height:20px;right:320.70px;-webkit-text-stroke:0.1px #3c4043;">5</div>
<div class="r" style="left:735.70px;top:698.60px;width:203.60px;height:1.00px;background:#dadce0;"></div>
<div class="r" style="left:736.20px;top:698.10px;width:8.00px;height:2.00px;background:#1c6bd9;"></div>
<div class="t" style="top:702px;font-size:10.6px;color:#3c4043;line-height:20px;left:735.70px;-webkit-text-stroke:0.1px #3c4043;">Orange City</div>
<div class="t" style="top:702px;font-size:10.6px;color:#3c4043;line-height:20px;right:320.70px;-webkit-text-stroke:0.1px #3c4043;">5</div>
<div class="r" style="left:735.70px;top:724.25px;width:203.60px;height:1.00px;background:#dadce0;"></div>
<div class="r" style="left:736.20px;top:723.75px;width:8.00px;height:2.00px;background:#1c6bd9;"></div>
<div class="t" style="top:727px;font-size:10.6px;color:#3c4043;line-height:20px;left:735.70px;-webkit-text-stroke:0.1px #3c4043;">Aspen</div>
<div class="t" style="top:727px;font-size:10.6px;color:#3c4043;line-height:20px;right:320.70px;-webkit-text-stroke:0.1px #3c4043;">4</div>
<div class="r" style="left:736.20px;top:749.40px;width:6.00px;height:2.00px;background:#1c6bd9;"></div>
<div class="t" style="top:784px;font-size:11.921px;color:#1b6bd6;line-height:20px;left:868.10px;">View cities</div>
<svg class="r" style="left:932.8px;top:788.8px;" width="11" height="11" viewBox="0 0 11 11"><path d="M0.5 5.5H9.5M5 1L9.5 5.5L5 10" fill="none" stroke="#1a73e8" stroke-width="1.5"/></svg>
<div class="t" style="top:513px;font-size:11.507px;color:#202124;line-height:20px;left:991.80px;">Organic Google Search i...</div>
<svg class="r" style="left:1134px;top:522px;" width="6.5" height="3.2" viewBox="0 0 6.5 3.2"><path d="M0 0H6.5L3.25 3.2Z" fill="#5f6368"/></svg>
<div class="t" style="top:529px;font-size:11.392px;color:#202124;line-height:20px;left:991.80px;">by Landing page + qu...</div>
<svg class="r" style="left:1118.5px;top:537.8px;" width="6.5" height="3.2" viewBox="0 0 6.5 3.2"><path d="M0 0H6.5L3.25 3.2Z" fill="#5f6368"/></svg>
<div class="chip" style="left:1148px;top:515.3px;width:19.5px;height:19.5px;border-radius:50%"></div>
<svg class="r" style="left:1154.75px;top:521.55px;" width="8" height="9" viewBox="0 0 8 9"><path d="M0.8 1H7.2L4.7 4.3V8H3.3V4.3Z" fill="none" stroke="#202124" stroke-width="1.1" stroke-linejoin="round"/></svg>
<div class="chip" style="left:1173.5px;top:515.3px;width:20.3px;height:20.3px;border-radius:50%"></div>
<svg class="r" style="left:1177.9px;top:519.7px;" width="13.5" height="13.5" viewBox="0 0 13.5 13.5"><circle cx="6.75" cy="6.75" r="5.95" fill="none" stroke="#137333" stroke-width="1.3"/><path d="M3.6450000000000005 7.425000000000001 L5.805 9.315 L10.125 4.859999999999999" fill="none" stroke="#137333" stroke-width="1.35"/></svg>
<div class="t" style="top:547px;font-size:9px;color:#5f6368;line-height:20px;letter-spacing:0.568px;left:991.80px;-webkit-text-stroke:0.15px #5f6368;">LANDING PAGE + Q…</div>
<div class="t" style="top:547px;font-size:9px;color:#5f6368;line-height:20px;letter-spacing:0.327px;left:1110.20px;-webkit-text-stroke:0.15px #5f6368;">ORGANIC GOO…</div>
<svg class="r" style="left:992px;top:564.2px;" width="95" height="1" viewBox="0 0 95 1"><line x1="0" y1="0.5" x2="95" y2="0.5" stroke="#80868b" stroke-width="1" stroke-dasharray="2.6 2.2"/></svg>
<svg class="r" style="left:1110.2px;top:564.2px;" width="71.8" height="1" viewBox="0 0 71.8 1"><line x1="0" y1="0.5" x2="71.79999999999995" y2="0.5" stroke="#80868b" stroke-width="1" stroke-dasharray="2.6 2.2"/></svg>
<div class="r" style="left:991.80px;top:569.80px;width:203.20px;height:1.00px;background:#dadce0;"></div>
<div class="t" style="top:573px;font-size:10.5px;color:#3c4043;line-height:20px;left:991.80px;-webkit-text-stroke:0.1px #3c4043;">/</div>
<div class="t" style="top:573px;font-size:10.5px;color:#3c4043;line-height:20px;right:65.00px;-webkit-text-stroke:0.1px #3c4043;">411</div>
<div class="r" style="left:991.80px;top:596.00px;width:203.20px;height:1.00px;background:#dadce0;"></div>
<div class="r" style="left:992.30px;top:595.50px;width:90.00px;height:2.00px;background:#1c6bd9;"></div>
<div class="t" style="top:599px;font-size:10.5px;color:#3c4043;line-height:20px;left:991.80px;-webkit-text-stroke:0.1px #3c4043;">/blog/how-much-doe…</div>
<div class="t" style="top:599px;font-size:10.5px;color:#3c4043;line-height:20px;right:65.00px;-webkit-text-stroke:0.1px #3c4043;">331</div>
<div class="r" style="left:991.80px;top:621.75px;width:203.20px;height:1.00px;background:#dadce0;"></div>
<div class="r" style="left:992.30px;top:621.25px;width:72.00px;height:2.00px;background:#1c6bd9;"></div>
<div class="t" style="top:625px;font-size:10.5px;color:#3c4043;line-height:20px;left:991.80px;-webkit-text-stroke:0.1px #3c4043;">/blog/head-spa-orla…</div>
<div class="t" style="top:625px;font-size:10.5px;color:#3c4043;line-height:20px;right:65.00px;-webkit-text-stroke:0.1px #3c4043;">89</div>
<div class="r" style="left:991.80px;top:647.50px;width:203.20px;height:1.00px;background:#dadce0;"></div>
<div class="r" style="left:992.30px;top:647.00px;width:19.00px;height:2.00px;background:#1c6bd9;"></div>
<div class="t" style="top:650px;font-size:10.5px;color:#3c4043;line-height:20px;left:991.80px;-webkit-text-stroke:0.1px #3c4043;">/blog/what-is-a-back…</div>
<div class="t" style="top:650px;font-size:10.5px;color:#3c4043;line-height:20px;right:65.00px;-webkit-text-stroke:0.1px #3c4043;">68</div>
<div class="r" style="left:991.80px;top:673.25px;width:203.20px;height:1.00px;background:#dadce0;"></div>
<div class="r" style="left:992.30px;top:672.75px;width:15.00px;height:2.00px;background:#1c6bd9;"></div>
<div class="t" style="top:676px;font-size:10.5px;color:#3c4043;line-height:20px;left:991.80px;-webkit-text-stroke:0.1px #3c4043;">/blog/</div>
<div class="t" style="top:676px;font-size:10.5px;color:#3c4043;line-height:20px;right:65.00px;-webkit-text-stroke:0.1px #3c4043;">35</div>
<div class="r" style="left:992.30px;top:698.50px;width:8.00px;height:2.00px;background:#1c6bd9;"></div>
<div class="t" style="top:784px;font-size:12.013px;color:#1b6bd6;line-height:20px;left:997.80px;">View Google organic traffic acqui...</div>
<svg class="r" style="left:1195.5px;top:788.8px;" width="11" height="11" viewBox="0 0 11 11"><path d="M0.5 5.5H9.5M5 1L9.5 5.5L5 10" fill="none" stroke="#1a73e8" stroke-width="1.5"/></svg>
<div class="t" style="top:846px;font-size:11.691px;color:#202124;line-height:20px;left:95.60px;">Organic Google Search clicks</div>
<svg class="r" style="left:250.3px;top:855.2px;" width="6.5" height="3" viewBox="0 0 6.5 3"><path d="M0 0H6.5L3.25 3Z" fill="#5f6368"/></svg>
<div class="t" style="top:846px;font-size:12px;color:#202124;line-height:20px;left:261.00px;">by</div>
<div class="t" style="top:862px;font-size:11.988px;color:#202124;line-height:20px;left:95.60px;">Organic Google Search query</div>
<div class="chip" style="left:380px;top:848.3px;width:19.7px;height:19.7px;border-radius:50%"></div>
<svg class="r" style="left:386.85px;top:854.65px;" width="8" height="9" viewBox="0 0 8 9"><path d="M0.8 1H7.2L4.7 4.3V8H3.3V4.3Z" fill="none" stroke="#202124" stroke-width="1.1" stroke-linejoin="round"/></svg>
<div class="chip" style="left:405px;top:848.3px;width:20.3px;height:20.3px;border-radius:50%"></div>
<svg class="r" style="left:409.4px;top:852.7px;" width="13.5" height="13.5" viewBox="0 0 13.5 13.5"><circle cx="6.75" cy="6.75" r="5.95" fill="none" stroke="#137333" stroke-width="1.3"/><path d="M3.6450000000000005 7.425000000000001 L5.805 9.315 L10.125 4.859999999999999" fill="none" stroke="#137333" stroke-width="1.35"/></svg>
<div class="t" style="top:880px;font-size:9px;color:#5f6368;line-height:20px;letter-spacing:0.57px;left:95.60px;-webkit-text-stroke:0.15px #5f6368;">ORGANIC GOOGLE SEARCH QUERY</div>
<div class="t" style="top:880px;font-size:9px;color:#5f6368;line-height:20px;letter-spacing:0.464px;left:284.40px;-webkit-text-stroke:0.15px #5f6368;">ORGANIC GOOGLE SEARC…</div>
<svg class="r" style="left:284.4px;top:897.1px;" width="128.6" height="1" viewBox="0 0 128.6 1"><line x1="0" y1="0.5" x2="128.60000000000002" y2="0.5" stroke="#80868b" stroke-width="1" stroke-dasharray="2.6 2.2"/></svg>
<div class="r" style="left:95.60px;top:902.50px;width:331.70px;height:1.00px;background:#dadce0;"></div>
<div class="t" style="top:907px;font-size:10.45px;color:#3c4043;line-height:20px;left:95.60px;-webkit-text-stroke:0.1px #3c4043;">33 esthetics</div>
<div class="t" style="top:907px;font-size:10.45px;color:#3c4043;line-height:20px;right:832.70px;-webkit-text-stroke:0.1px #3c4043;">11</div>
<div class="r" style="left:95.60px;top:928.90px;width:331.70px;height:1.00px;background:#dadce0;"></div>
<div class="r" style="left:96.10px;top:928.40px;width:261.00px;height:2.00px;background:#1c6bd9;"></div>
<div class="t" style="top:933px;font-size:10.45px;color:#3c4043;line-height:20px;left:95.60px;-webkit-text-stroke:0.1px #3c4043;">facial near me</div>
<div class="t" style="top:933px;font-size:10.45px;color:#3c4043;line-height:20px;right:832.70px;-webkit-text-stroke:0.1px #3c4043;">1</div>
<div class="r" style="left:95.60px;top:954.58px;width:331.70px;height:1.00px;background:#dadce0;"></div>
<div class="r" style="left:96.10px;top:954.08px;width:24.00px;height:2.00px;background:#1c6bd9;"></div>
<div class="t" style="top:958px;font-size:10.45px;color:#3c4043;line-height:20px;left:95.60px;-webkit-text-stroke:0.1px #3c4043;">health spa near me</div>
<div class="t" style="top:958px;font-size:10.45px;color:#3c4043;line-height:20px;right:832.70px;-webkit-text-stroke:0.1px #3c4043;">1</div>
<div class="r" style="left:95.60px;top:980.26px;width:331.70px;height:1.00px;background:#dadce0;"></div>
<div class="r" style="left:96.10px;top:979.76px;width:24.00px;height:2.00px;background:#1c6bd9;"></div>
<div class="t" style="top:984px;font-size:10.45px;color:#3c4043;line-height:20px;left:95.60px;-webkit-text-stroke:0.1px #3c4043;">scalp massage near me</div>
<div class="t" style="top:984px;font-size:10.45px;color:#3c4043;line-height:20px;right:832.70px;-webkit-text-stroke:0.1px #3c4043;">1</div>
<div class="r" style="left:96.10px;top:1005.44px;width:24.00px;height:2.00px;background:#1c6bd9;"></div>
<div class="t" style="top:1117px;font-size:11.878px;color:#1b6bd6;line-height:20px;left:222.20px;">View Google organic search queries</div>
<svg class="r" style="left:421.3px;top:1121.5px;" width="11" height="11" viewBox="0 0 11 11"><path d="M0.5 5.5H9.5M5 1L9.5 5.5L5 10" fill="none" stroke="#1a73e8" stroke-width="1.5"/></svg>
<div class="t" style="top:846px;font-size:11.188px;color:#202124;line-height:20px;left:479.60px;">Sessions</div>
<svg class="r" style="left:525.9px;top:855.1px;" width="6.1" height="3" viewBox="0 0 6.1 3"><path d="M0 0H6.1L3.05 3Z" fill="#5f6368"/></svg>
<div class="t" style="top:846px;font-size:11.57px;color:#202124;line-height:20px;left:536.00px;">by Session manual source</div>
<svg class="r" style="left:672.6px;top:855.1px;" width="6.6" height="3" viewBox="0 0 6.6 3"><path d="M0 0H6.6L3.3 3Z" fill="#5f6368"/></svg>
<div class="chip" style="left:700px;top:848px;width:46px;height:20px"></div>
<svg class="r" style="left:706.75px;top:852.45px;" width="13.5" height="13.5" viewBox="0 0 13.5 13.5"><circle cx="6.75" cy="6.75" r="5.95" fill="none" stroke="#137333" stroke-width="1.3"/><path d="M3.6450000000000005 7.425000000000001 L5.805 9.315 L10.125 4.859999999999999" fill="none" stroke="#137333" stroke-width="1.35"/></svg>
<svg class="r" style="left:730.5px;top:857.7px;" width="6.5" height="3.2" viewBox="0 0 6.5 3.2"><path d="M0 0H6.5L3.25 3.2Z" fill="#5f6368"/></svg>
<div class="t" style="top:880px;font-size:9px;color:#5f6368;line-height:20px;letter-spacing:0.7px;left:479.80px;-webkit-text-stroke:0.15px #5f6368;">SESSION MANUAL SOURCE</div>
<div class="t" style="top:880px;font-size:9px;color:#5f6368;line-height:20px;letter-spacing:0.612px;right:511.89px;-webkit-text-stroke:0.15px #5f6368;">SESSIONS</div>
<svg class="r" style="left:696.4px;top:897.2px;" width="50.6" height="1" viewBox="0 0 50.6 1"><line x1="0" y1="0.5" x2="50.60000000000002" y2="0.5" stroke="#80868b" stroke-width="1" stroke-dasharray="2.6 2.2"/></svg>
<div class="r" style="left:479.80px;top:903.10px;width:267.70px;height:1.00px;background:#dadce0;"></div>
<div class="t" style="top:906px;font-size:10.55px;color:#3c4043;line-height:20px;left:479.80px;-webkit-text-stroke:0.1px #3c4043;">m.facebook.com</div>
<div class="t" style="top:906px;font-size:10.55px;color:#3c4043;line-height:20px;right:512.50px;-webkit-text-stroke:0.1px #3c4043;">50</div>
<div class="r" style="left:479.80px;top:929.00px;width:267.70px;height:1.00px;background:#dadce0;"></div>
<div class="r" style="left:480.30px;top:928.50px;width:108.00px;height:2.00px;background:#1c6bd9;"></div>
<div class="t" style="top:932px;font-size:10.55px;color:#3c4043;line-height:20px;left:479.80px;-webkit-text-stroke:0.1px #3c4043;">google</div>
<div class="t" style="top:932px;font-size:10.55px;color:#3c4043;line-height:20px;right:512.50px;-webkit-text-stroke:0.1px #3c4043;">40</div>
<div class="r" style="left:479.80px;top:954.63px;width:267.70px;height:1.00px;background:#dadce0;"></div>
<div class="r" style="left:480.30px;top:954.13px;width:87.00px;height:2.00px;background:#1c6bd9;"></div>
<div class="t" style="top:958px;font-size:10.55px;color:#3c4043;line-height:20px;left:479.80px;-webkit-text-stroke:0.1px #3c4043;">lm.facebook.com</div>
<div class="t" style="top:958px;font-size:10.55px;color:#3c4043;line-height:20px;right:512.50px;-webkit-text-stroke:0.1px #3c4043;">14</div>
<div class="r" style="left:479.80px;top:980.26px;width:267.70px;height:1.00px;background:#dadce0;"></div>
<div class="r" style="left:480.30px;top:979.76px;width:30.00px;height:2.00px;background:#1c6bd9;"></div>
<div class="t" style="top:983px;font-size:10.55px;color:#3c4043;line-height:20px;left:479.80px;-webkit-text-stroke:0.1px #3c4043;">l.facebook.com</div>
<div class="t" style="top:983px;font-size:10.55px;color:#3c4043;line-height:20px;right:512.50px;-webkit-text-stroke:0.1px #3c4043;">6</div>
<div class="r" style="left:479.80px;top:1005.89px;width:267.70px;height:1.00px;background:#dadce0;"></div>
<div class="r" style="left:480.30px;top:1005.39px;width:13.00px;height:2.00px;background:#1c6bd9;"></div>
<div class="t" style="top:1009px;font-size:10.55px;color:#3c4043;line-height:20px;left:479.80px;-webkit-text-stroke:0.1px #3c4043;">l.instagram.com</div>
<div class="t" style="top:1009px;font-size:10.55px;color:#3c4043;line-height:20px;right:512.50px;-webkit-text-stroke:0.1px #3c4043;">5</div>
<div class="r" style="left:479.80px;top:1031.52px;width:267.70px;height:1.00px;background:#dadce0;"></div>
<div class="r" style="left:480.30px;top:1031.02px;width:11.00px;height:2.00px;background:#1c6bd9;"></div>
<div class="t" style="top:1034px;font-size:10.55px;color:#3c4043;line-height:20px;left:479.80px;-webkit-text-stroke:0.1px #3c4043;">ig</div>
<div class="t" style="top:1034px;font-size:10.55px;color:#3c4043;line-height:20px;right:512.50px;-webkit-text-stroke:0.1px #3c4043;">3</div>
<div class="r" style="left:479.80px;top:1057.15px;width:267.70px;height:1.00px;background:#dadce0;"></div>
<div class="r" style="left:480.30px;top:1056.65px;width:6.00px;height:2.00px;background:#1c6bd9;"></div>
<div class="t" style="top:1060px;font-size:10.55px;color:#3c4043;line-height:20px;left:479.80px;-webkit-text-stroke:0.1px #3c4043;">facebook.com</div>
<div class="t" style="top:1060px;font-size:10.55px;color:#3c4043;line-height:20px;right:512.50px;-webkit-text-stroke:0.1px #3c4043;">2</div>
<div class="r" style="left:480.30px;top:1082.28px;width:4.00px;height:2.00px;background:#1c6bd9;"></div>
<div class="t" style="top:1117px;font-size:11.663px;color:#1b6bd6;line-height:20px;left:606.20px;">View Manual campaigns</div>
<svg class="r" style="left:741.5px;top:1121.5px;" width="11" height="11" viewBox="0 0 11 11"><path d="M0.5 5.5H9.5M5 1L9.5 5.5L5 10" fill="none" stroke="#1a73e8" stroke-width="1.5"/></svg>
<div class="t" style="top:847px;font-size:11.968px;color:#3c4043;line-height:20px;left:799.20px;">Users by disqualified lead reason</div>
<div class="chip" style="left:1148px;top:848px;width:46px;height:20px"></div>
<svg class="r" style="left:1154.75px;top:852.45px;" width="13.5" height="13.5" viewBox="0 0 13.5 13.5"><circle cx="6.75" cy="6.75" r="5.95" fill="none" stroke="#137333" stroke-width="1.3"/><path d="M3.6450000000000005 7.425000000000001 L5.805 9.315 L10.125 4.859999999999999" fill="none" stroke="#137333" stroke-width="1.35"/></svg>
<svg class="r" style="left:1178.5px;top:857.7px;" width="6.5" height="3.2" viewBox="0 0 6.5 3.2"><path d="M0 0H6.5L3.25 3.2Z" fill="#5f6368"/></svg>
<div class="r" style="left:803.00px;top:887.90px;width:365.00px;height:1.00px;background:#f1f1f1;"></div>
<div class="r" style="left:803.00px;top:936.80px;width:365.00px;height:1.00px;background:#f1f1f1;"></div>
<div class="r" style="left:803.00px;top:985.00px;width:365.00px;height:1.00px;background:#f1f1f1;"></div>
<div class="r" style="left:803.00px;top:1033.20px;width:365.00px;height:1.00px;background:#f1f1f1;"></div>
<div class="r" style="left:803.00px;top:1081.50px;width:365.00px;height:1.00px;background:#f1f1f1;"></div>
<div class="r" style="left:932.00px;top:975.00px;width:105.00px;height:20.00px;background:#fff;"></div>
<div class="t" style="top:977px;font-size:11.064px;color:#202124;line-height:20px;left:942.40px;">No data available</div>
<div class="r" style="left:824.10px;top:1082.00px;width:1.00px;height:5.00px;background:#e6e6e6;"></div>
<div class="t" style="top:1082px;font-size:10px;color:#5f6368;line-height:20px;left:824.10px;">19</div>
<div class="t" style="top:1092px;font-size:10px;color:#5f6368;line-height:20px;left:824.10px;">Mar</div>
<div class="r" style="left:866.90px;top:1082.00px;width:1.00px;height:5.00px;background:#e6e6e6;"></div>
<div class="t" style="top:1082px;font-size:10px;color:#5f6368;line-height:20px;left:867.40px;transform:translateX(-50%);">21</div>
<div class="r" style="left:909.70px;top:1082.00px;width:1.00px;height:5.00px;background:#e6e6e6;"></div>
<div class="t" style="top:1082px;font-size:10px;color:#5f6368;line-height:20px;left:910.20px;transform:translateX(-50%);">23</div>
<div class="r" style="left:952.50px;top:1082.00px;width:1.00px;height:5.00px;background:#e6e6e6;"></div>
<div class="t" style="top:1082px;font-size:10px;color:#5f6368;line-height:20px;left:953.00px;transform:translateX(-50%);">25</div>
<div class="r" style="left:995.30px;top:1082.00px;width:1.00px;height:5.00px;background:#e6e6e6;"></div>
<div class="t" style="top:1082px;font-size:10px;color:#5f6368;line-height:20px;left:995.80px;transform:translateX(-50%);">27</div>
<div class="r" style="left:1038.10px;top:1082.00px;width:1.00px;height:5.00px;background:#e6e6e6;"></div>
<div class="t" style="top:1082px;font-size:10px;color:#5f6368;line-height:20px;left:1038.60px;transform:translateX(-50%);">29</div>
<div class="r" style="left:1080.90px;top:1082.00px;width:1.00px;height:5.00px;background:#e6e6e6;"></div>
<div class="t" style="top:1082px;font-size:10px;color:#5f6368;line-height:20px;left:1081.40px;transform:translateX(-50%);">31</div>
<div class="r" style="left:1102.30px;top:1082.00px;width:1.00px;height:5.00px;background:#e6e6e6;"></div>
<div class="t" style="top:1082px;font-size:10px;color:#5f6368;line-height:20px;left:1102.80px;transform:translateX(-50%);">01</div>
<div class="t" style="top:1092px;font-size:10px;color:#5f6368;line-height:20px;left:1102.80px;transform:translateX(-50%);">Apr</div>
<div class="r" style="left:1145.10px;top:1082.00px;width:1.00px;height:5.00px;background:#e6e6e6;"></div>
<div class="t" style="top:1082px;font-size:10px;color:#5f6368;line-height:20px;right:113.90px;">03</div>
<div class="t" style="top:1117px;font-size:11.814px;color:#1b6bd6;line-height:20px;left:1019.60px;">View lead disqualified and loss</div>
<svg class="r" style="left:1189px;top:1121.2px;" width="11" height="11" viewBox="0 0 11 11"><path d="M0.5 5.5H9.5M5 1L9.5 5.5L5 10" fill="none" stroke="#1a73e8" stroke-width="1.5"/></svg>
</body></html>
